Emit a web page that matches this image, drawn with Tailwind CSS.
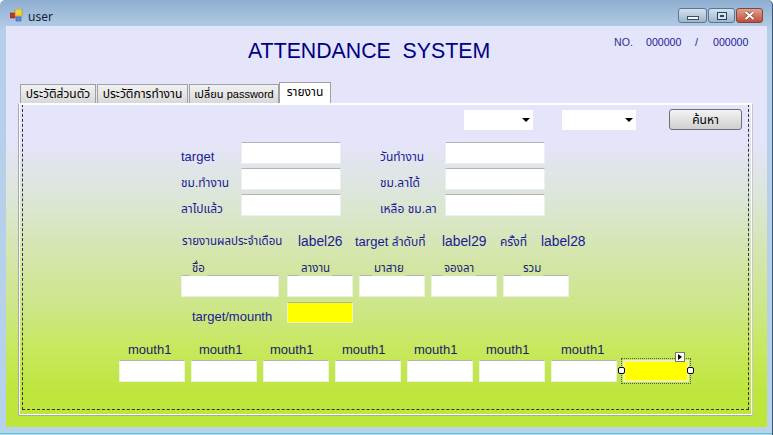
<!DOCTYPE html>
<html><head><meta charset="utf-8"><script src="https://cdn.jsdelivr.net/npm/@tailwindcss/browser@4"></script></head>
<body class="m-0 bg-white">
<div class="relative w-[773px] h-[435px] overflow-hidden rounded-t-[5px] flex flex-col font-['Liberation_Sans','Noto_Sans_Thai','Noto_Sans',sans-serif] bg-linear-to-b from-[#8eaed0] via-[#b6cfe8] via-[7%] to-[#b6d2ec] border-r border-r-[#3a5570]">
  <!-- title bar -->
  <div class="h-[26px] flex items-start shrink-0">
    <svg class="ml-[10px] mt-[9px] w-[13px] h-[13px]" viewBox="0 0 13 13"><rect x="0" y="4" width="5" height="5" fill="#c8302a" stroke="#8a2a20" stroke-width=".6"/><rect x="5" y="0" width="7" height="7" fill="#f5d040" stroke="#b08a20" stroke-width=".6"/><rect x="6" y="8" width="5" height="4" fill="#5a8ad8" stroke="#3a5ea0" stroke-width=".6"/></svg>
    <span class="ml-[5px] mt-[9px] text-[12px] leading-[16px] text-[#1a2230] font-['Noto_Sans',sans-serif]">user</span>
    <div class="ml-auto mr-[9px] mt-[8px] flex gap-x-[1px]">
      <div class="w-[29px] h-[15px] rounded-[3px] border border-[#5c7690] bg-linear-to-b from-[#d4e2ee] to-[#9db6cc] flex items-center justify-center"><div class="w-[12px] h-[4px] mt-[4px] bg-[#f0f4f8] border border-[#3a4e64]"></div></div>
      <div class="w-[27px] h-[15px] rounded-[3px] border border-[#5c7690] bg-linear-to-b from-[#d4e2ee] to-[#9db6cc] flex items-center justify-center"><div class="w-[10px] h-[8px] border border-[#2e4258] bg-[#d4e2ee] flex items-center justify-center"><div class="w-[4px] h-[2px] bg-[#2e4258]"></div></div></div>
      <div class="w-[27px] h-[15px] rounded-[3px] border border-[#7a4a40] bg-linear-to-b from-[#e2a08e] to-[#c2483a] flex items-center justify-center"><svg width="13" height="9" viewBox="0 0 13 9"><path d="M2.5 1L10.5 8M10.5 1L2.5 8" stroke="#6a3a30" stroke-width="3.2"/><path d="M2.5 1L10.5 8M10.5 1L2.5 8" stroke="#fff" stroke-width="2.2"/></svg></div>
    </div>
  </div>
  <!-- client -->
  <div class="ml-[6px] w-[761px] h-[401px] shrink-0 bg-[linear-gradient(to_bottom,#e4e4fa_0%,#e4e4fa_29%,#dce6d6_43.4%,#d5e6b0_55.9%,#cde686_70.8%,#c8e860_79.6%,#bfe63f_90.8%,#bce638_100%)] flex flex-col">
    <div class="h-[56px] shrink-0 flex items-start">
      <div class="w-[366px] ml-[242px] mt-[11px] text-[21.3px] leading-[28px] text-[#000080] whitespace-pre">ATTENDANCE  SYSTEM</div>
      <div class="mt-[9px] flex text-[10.6px] leading-[14px] text-[#23239a]">
        <span class="w-[32px] text-[#30308a]">NO.</span><span class="w-[49px]">000000</span><span class="w-[18px]">/</span><span>000000</span>
      </div>
    </div>
    <!-- tabs -->
    <div class="h-[21px] shrink-0 ml-[14px] flex items-end text-[12px] text-black">
      <div class="w-[76px] h-[19px] mr-[1px] border border-b-0 border-[#a0a0a0] bg-linear-to-b from-[#f2f2f2] to-[#d8d8d8] flex items-center justify-center leading-none whitespace-nowrap">ประวัติส่วนตัว</div>
      <div class="w-[91px] h-[19px] mr-[1px] border border-b-0 border-[#a0a0a0] bg-linear-to-b from-[#f2f2f2] to-[#d8d8d8] flex items-center justify-center leading-none whitespace-nowrap">ประวัติการทำงาน</div>
      <div class="w-[90px] h-[19px] border border-b-0 border-[#a0a0a0] bg-linear-to-b from-[#f2f2f2] to-[#d8d8d8] flex items-center justify-center leading-none whitespace-nowrap text-[11px]">เปลี่ยน password</div>
      <div class="w-[52px] h-[21px] pb-[2px] border border-b-0 border-[#a0a0a0] bg-white flex items-center justify-center leading-none">รายงาน</div>
    </div>
    <!-- tab panel -->
    <div class="ml-[12px] w-[735px] h-[313px] shrink-0 border border-[#a8a8a8] border-t-white border-r-[#c8c8c8] p-[2px] pt-0 outline outline-white -outline-offset-2">
      <div class="ml-[1px] w-[727px] h-[306px] border border-dashed border-[#333] flex flex-col text-[#1a1a96]">
        <div class="flex h-[21px] mt-[4px] pl-[441px] shrink-0">
          <div class="w-[69px] h-[20px] mt-[1px] bg-white rounded-[1px] flex items-center justify-end pr-[3px]"><svg width="8" height="4" viewBox="0 0 8 4"><path d="M0 0H8L4 4Z" fill="#000"/></svg></div>
          <div class="ml-[29px] w-[74px] h-[20px] mt-[1px] bg-white rounded-[1px] flex items-center justify-end pr-[3px]"><svg width="8" height="4" viewBox="0 0 8 4"><path d="M0 0H8L4 4Z" fill="#000"/></svg></div>
          <div class="ml-[33px] w-[73px] h-[21px] rounded-[3px] border border-[#707070] bg-linear-to-b from-[#f4f4f4] to-[#cfcfcf] flex items-center justify-center text-[12px] text-black leading-none">ค้นหา</div>
        </div>
        <!-- form -->
        <div class="mt-[12px] pl-[158px] grid grid-cols-[60px_100px_39px_65px_100px] auto-rows-[22px] gap-y-[4px] text-[12px] items-center shrink-0">
          <span class="text-[13px] pt-[8px]">target</span><div class="h-[22px] bg-white border border-[#eceff0] border-t-[#b4b4b4] rounded-[1px]"></div><span></span><span class="pt-[8px]">วันทำงาน</span><div class="h-[22px] bg-white border border-[#eceff0] border-t-[#b4b4b4] rounded-[1px]"></div>
          <span class="pt-[8px]">ชม.ทำงาน</span><div class="h-[22px] bg-white border border-[#eceff0] border-t-[#b4b4b4] rounded-[1px]"></div><span></span><span class="pt-[8px]">ชม.ลาได้</span><div class="h-[22px] bg-white border border-[#eceff0] border-t-[#b4b4b4] rounded-[1px]"></div>
          <span class="pt-[8px]">ลาไปแล้ว</span><div class="h-[22px] bg-white border border-[#eceff0] border-t-[#b4b4b4] rounded-[1px]"></div><span></span><span class="pt-[8px]">เหลือ ชม.ลา</span><div class="h-[22px] bg-white border border-[#eceff0] border-t-[#b4b4b4] rounded-[1px]"></div>
        </div>
        <!-- report line -->
        <div class="mt-[16px] h-[20px] pl-[159px] flex items-center shrink-0 text-[13.8px] whitespace-nowrap">
          <span class="w-[116px] text-[11.5px]">รายงานผลประจำเดือน</span><span class="w-[57px]">label26</span><span class="w-[87px] text-[13px]">target <span class="text-[12px]">ลำดับที่</span></span><span class="w-[58px]">label29</span><span class="w-[41px] text-[12px]">ครั้งที่</span><span>label28</span>
        </div>
        <!-- summary headers -->
        <div class="relative z-10 mt-[9px] h-[14px] pl-[158px] flex text-[11.5px] leading-[15px] shrink-0 text-[#1a1a7a]">
          <span class="w-[98px] pl-[9px]"><span class="inline-block h-[15px] px-[2px] bg-[#d2e6a1]">ชื่อ</span></span>
          <span class="ml-[8px] w-[66px] pl-[12px]"><span class="inline-block h-[15px] px-[2px] bg-[#d2e6a1]">ลางาน</span></span>
          <span class="ml-[6px] w-[66px] pl-[13px]"><span class="inline-block h-[15px] px-[2px] bg-[#d2e6a1]">มาสาย</span></span>
          <span class="ml-[6px] w-[66px] pl-[11px]"><span class="inline-block h-[15px] px-[2px] bg-[#d2e6a1]">จองลา</span></span>
          <span class="ml-[6px] w-[66px] pl-[18px]"><span class="inline-block h-[15px] px-[2px] bg-[#d2e6a1]">รวม</span></span>
        </div>
        <div class="h-[22px] pl-[158px] flex gap-x-[6px] shrink-0">
          <div class="w-[98px] mr-[2px] bg-white border border-[#eceff0] border-t-[#b4b4b4] rounded-[1px]"></div>
          <div class="w-[66px] bg-white border border-[#eceff0] border-t-[#b4b4b4] rounded-[1px]"></div>
          <div class="w-[66px] bg-white border border-[#eceff0] border-t-[#b4b4b4] rounded-[1px]"></div>
          <div class="w-[66px] bg-white border border-[#eceff0] border-t-[#b4b4b4] rounded-[1px]"></div>
          <div class="w-[66px] bg-white border border-[#eceff0] border-t-[#b4b4b4] rounded-[1px]"></div>
        </div>
        <div class="mt-[5px] h-[21px] pl-[169px] flex items-center shrink-0">
          <span class="w-[95px] text-[13px] pt-[8px]">target/mounth</span>
          <div class="w-[66px] h-[21px] bg-[#ffff00] border border-[#f2f4c0] border-t-[#b4b4a0] rounded-[1px]"></div>
        </div>
        <!-- months -->
        <div class="mt-[19px] h-[18px] pl-[96px] grid grid-cols-[repeat(7,66px)] gap-x-[6px] text-[13px] leading-[16px] shrink-0 text-[#20206a]">
          <span class="pl-[9px]">mouth1</span><span class="pl-[8px]">mouth1</span><span class="pl-[7px]">mouth1</span><span class="pl-[7px]">mouth1</span><span class="pl-[7px]">mouth1</span><span class="pl-[7px]">mouth1</span><span class="pl-[10px]">mouth1</span>
        </div>
        <div class="h-[22px] pl-[96px] flex gap-x-[6px] shrink-0">
          <div class="w-[66px] bg-white border border-[#eef0e0] border-t-[#b4b4b4] rounded-[1px]"></div>
          <div class="w-[66px] bg-white border border-[#eef0e0] border-t-[#b4b4b4] rounded-[1px]"></div>
          <div class="w-[66px] bg-white border border-[#eef0e0] border-t-[#b4b4b4] rounded-[1px]"></div>
          <div class="w-[66px] bg-white border border-[#eef0e0] border-t-[#b4b4b4] rounded-[1px]"></div>
          <div class="w-[66px] bg-white border border-[#eef0e0] border-t-[#b4b4b4] rounded-[1px]"></div>
          <div class="w-[66px] bg-white border border-[#eef0e0] border-t-[#b4b4b4] rounded-[1px]"></div>
          <div class="w-[66px] bg-white border border-[#eef0e0] border-t-[#b4b4b4] rounded-[1px]"></div>
          <div class="relative w-[66px] bg-[#ffff00] border-2 border-[#eef4b0] rounded-[1px]">
            <div class="absolute left-[-4px] top-[-4px] w-[70px] h-[26px] border border-dotted border-[#555]"></div>
            <div class="absolute left-[-7px] top-[5px] w-[7px] h-[7px] rounded-[2px] bg-white border border-black"></div>
            <div class="absolute right-[-7px] top-[5px] w-[7px] h-[7px] rounded-[2px] bg-white border border-black"></div>
            <div class="absolute left-[50px] top-[-10px] w-[10px] h-[10px] bg-white border border-[#777] flex items-center justify-center"><svg width="4" height="6" viewBox="0 0 4 6"><path d="M0 0L4 3L0 6Z" fill="#000"/></svg></div>
          </div>
        </div>
      </div>
    </div>
  </div>
  <div class="mt-[6px] h-px bg-[#58c8d8] shrink-0"></div>
</div>
</body></html>
